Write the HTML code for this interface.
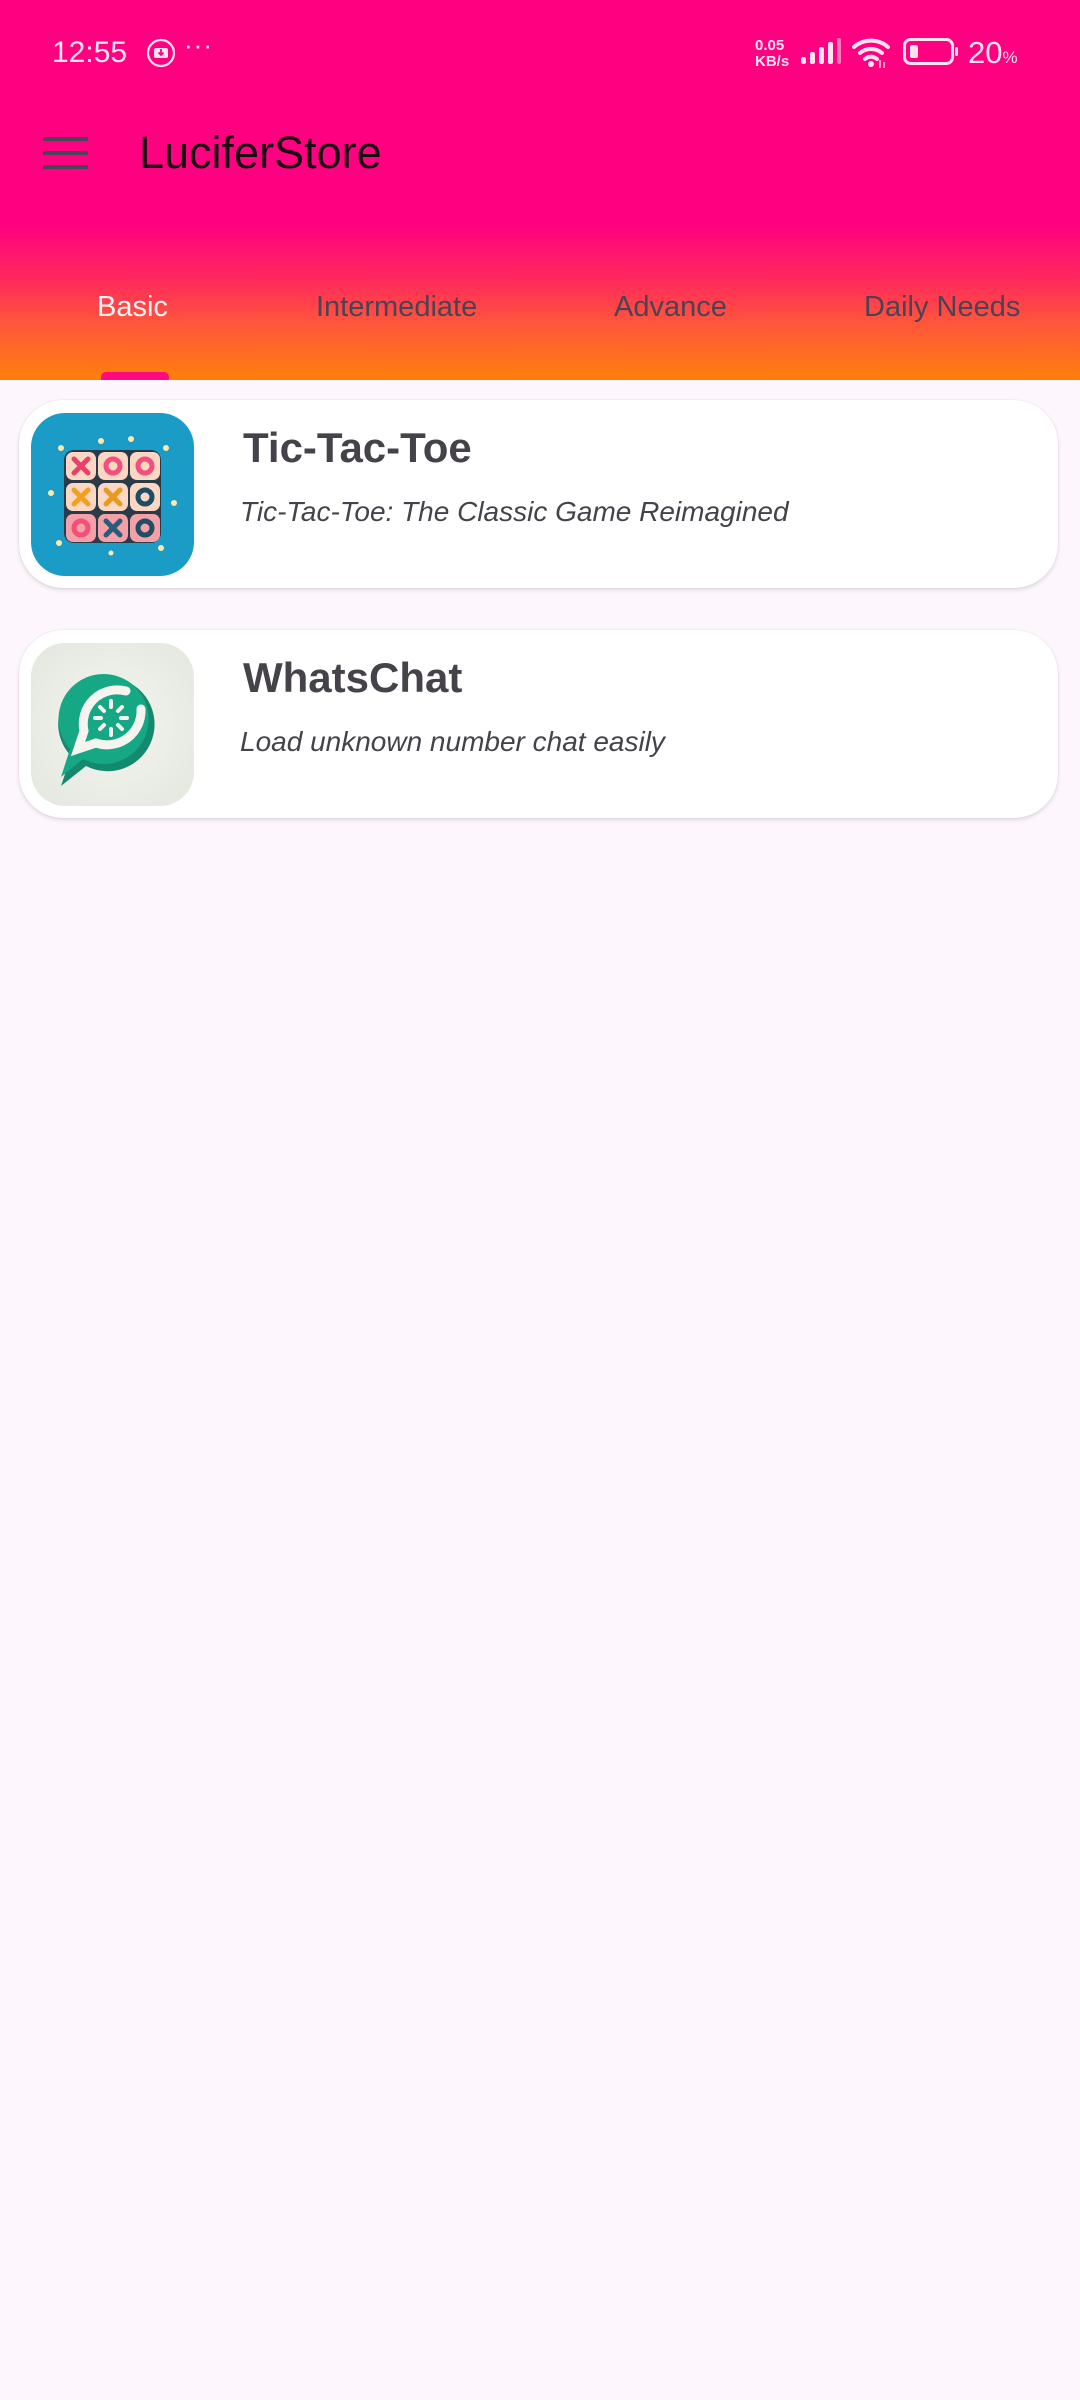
<!DOCTYPE html>
<html><head><meta charset="utf-8">
<style>
html,body{margin:0;padding:0}
body{width:1080px;height:2400px;background:#FDF6FD;font-family:"Liberation Sans",sans-serif;position:relative;overflow:hidden}
.top{position:absolute;left:0;top:0;width:1080px;height:380px;background:linear-gradient(180deg,#FF0080 0px,#FF0080 225px,#FF2A5C 280px,#FF5A38 328px,#FF7F0A 380px)}
.abs{position:absolute}
.tab{position:absolute;top:291px;font-size:29px;color:#4A4452;white-space:nowrap}
.card{position:absolute;left:19px;width:1039px;height:188px;background:#fff;border-radius:44px;box-shadow:0 2px 4px rgba(0,0,0,0.12),0 0 1px rgba(0,0,0,0.15)}
.icon{position:absolute;left:12px;top:13px;width:163px;height:163px;border-radius:34px;overflow:hidden}
.ttl{position:absolute;left:224px;font-size:42px;font-weight:bold;color:#45424A;white-space:nowrap}
.sub{position:absolute;left:221px;font-size:28px;font-style:italic;color:#45424A;white-space:nowrap}
</style></head><body>
<div class="top"></div>
<!-- status bar -->
<div class="abs" style="left:52px;top:36px;font-size:30px;color:#FDE3F0">12:55</div>
<svg class="abs" style="left:146px;top:38px" width="30" height="30" viewBox="0 0 30 30"><circle cx="15" cy="15" r="13" fill="none" stroke="#FDE3F0" stroke-width="2.2"/><rect x="8" y="10" width="14" height="10" rx="2" fill="#FDE3F0"/><path d="M15 11v6M12.5 14.5L15 17l2.5-2.5" stroke="#FF0080" stroke-width="1.8" fill="none"/></svg>
<div class="abs" style="left:184px;top:30px;font-size:26px;color:#FDE3F0;letter-spacing:1px">···</div>
<div class="abs" style="left:755px;top:38px;font-size:15px;line-height:16px;font-weight:bold;color:#FDE3F0">0.05<br>KB/s</div>
<svg class="abs" style="left:800px;top:38px" width="42" height="28" viewBox="0 0 42 28"><rect x="1" y="19" width="5" height="7" rx="2" fill="#FDE3F0"/><rect x="10" y="14" width="5" height="12" rx="2" fill="#FDE3F0"/><rect x="19" y="9" width="5" height="17" rx="2" fill="#FDE3F0"/><rect x="28" y="4" width="5" height="22" rx="2" fill="#FDE3F0"/><rect x="37" y="0" width="4" height="26" rx="2" fill="#FF7AB8"/></svg>
<svg class="abs" style="left:852px;top:36px" width="40" height="32" viewBox="0 0 40 32"><path d="M2 11a26 26 0 0 1 34 0" stroke="#FDE3F0" stroke-width="4" fill="none" stroke-linecap="round"/><path d="M8 17a17 17 0 0 1 22 0" stroke="#FDE3F0" stroke-width="4" fill="none" stroke-linecap="round"/><path d="M13 23a9 9 0 0 1 12 0" stroke="#FDE3F0" stroke-width="4" fill="none" stroke-linecap="round"/><circle cx="19" cy="28" r="3" fill="#FDE3F0"/><path d="M28 24v8M32 26v6" stroke="#FF9AC8" stroke-width="2"/></svg>
<svg class="abs" style="left:903px;top:38px" width="58" height="28" viewBox="0 0 58 28"><rect x="1.5" y="1.5" width="48" height="24" rx="6" fill="none" stroke="#FDE3F0" stroke-width="3"/><rect x="7" y="7" width="8" height="13" rx="2" fill="#FDE3F0"/><rect x="52" y="9" width="3" height="9" rx="1.5" fill="#FDE3F0"/></svg>
<div class="abs" style="left:968px;top:35px;font-size:31px;color:#FDE3F0">20<span style="font-size:17px">%</span></div>
<!-- app bar -->
<div class="abs" style="left:43px;top:137px;width:45px;height:4px;background:#4A4458"></div>
<div class="abs" style="left:43px;top:151px;width:45px;height:4px;background:#4A4458"></div>
<div class="abs" style="left:43px;top:165px;width:45px;height:4px;background:#4A4458"></div>
<div class="abs" style="left:139px;top:127px;font-size:45px;color:#1A0A12">LuciferStore</div>
<!-- tabs -->
<div class="tab" style="left:97px;color:#FFF5F7">Basic</div>
<div class="tab" style="left:316px">Intermediate</div>
<div class="tab" style="left:614px">Advance</div>
<div class="tab" style="left:864px">Daily Needs</div>
<div class="abs" style="left:101px;top:372px;width:68px;height:8px;background:#FF0A80;border-radius:5px 5px 0 0"></div>
<!-- card 1 -->
<div class="card" style="top:400px">
 <div class="icon" style="background:#1A9CC6">
  <svg width="163" height="163" viewBox="0 0 163 163">
   <g fill="#FFE9A8"><circle cx="30" cy="35" r="3"/><circle cx="70" cy="28" r="3"/><circle cx="100" cy="26" r="3"/><circle cx="135" cy="35" r="3"/><circle cx="20" cy="80" r="3"/><circle cx="143" cy="90" r="3"/><circle cx="28" cy="130" r="3"/><circle cx="80" cy="140" r="2.5"/><circle cx="130" cy="135" r="3"/></g>
   <g>
    <rect x="33" y="37" width="97" height="93" rx="10" fill="#2A3A48"/>
    <rect x="35" y="39" width="30" height="28" rx="7" fill="#FBD7C4"/><rect x="67" y="39" width="30" height="28" rx="7" fill="#FBD7C4"/><rect x="99" y="39" width="30" height="28" rx="7" fill="#FBD7C4"/>
    <rect x="35" y="70" width="30" height="28" rx="7" fill="#FBD7C4"/><rect x="67" y="70" width="30" height="28" rx="7" fill="#FBD7C4"/><rect x="99" y="70" width="30" height="28" rx="7" fill="#FBD7C4"/>
    <rect x="35" y="101" width="30" height="28" rx="7" fill="#F4A0A8"/><rect x="67" y="101" width="30" height="28" rx="7" fill="#F4A0A8"/><rect x="99" y="101" width="30" height="28" rx="7" fill="#F4A0A8"/>
    <path d="M43 46l14 14M57 46l-14 14" stroke="#E8406A" stroke-width="5" stroke-linecap="round"/>
    <circle cx="82" cy="53" r="7" fill="none" stroke="#F0507A" stroke-width="5"/>
    <circle cx="114" cy="53" r="7" fill="none" stroke="#F0507A" stroke-width="5"/>
    <path d="M43 77l14 14M57 77l-14 14" stroke="#F2A020" stroke-width="5" stroke-linecap="round"/>
    <path d="M75 77l14 14M89 77l-14 14" stroke="#E89A20" stroke-width="5" stroke-linecap="round"/>
    <circle cx="114" cy="84" r="7" fill="none" stroke="#1E4E66" stroke-width="5"/>
    <circle cx="50" cy="115" r="7" fill="none" stroke="#F0507A" stroke-width="5"/>
    <path d="M75 108l14 14M89 108l-14 14" stroke="#2A5C7A" stroke-width="5" stroke-linecap="round"/>
    <circle cx="114" cy="115" r="7" fill="none" stroke="#1E4E66" stroke-width="5"/>
   </g>
  </svg>
 </div>
 <div class="ttl" style="top:24px">Tic-Tac-Toe</div>
 <div class="sub" style="top:96px">Tic-Tac-Toe: The Classic Game Reimagined</div>
</div>
<!-- card 2 -->
<div class="card" style="top:630px">
 <div class="icon" style="background:radial-gradient(circle at 50% 50%,#F4F5F0,#E3E7DE)">
  <svg width="163" height="163" viewBox="0 0 163 163">
   <path d="M85 35a47 47 0 1 1-30 88l-25 20 10-30a47 47 0 0 1 45-78z" fill="#138A6E"/>
   <path d="M82 32a45 45 0 1 1-30 84l-22 18 9-28a45 45 0 0 1 43-74z" fill="#16A884"/>
   <path d="M95 48a34 34 0 0 0-42 40l-6 18 18-6a34 34 0 0 0 45-34" fill="none" stroke="#F6F4EE" stroke-width="9" stroke-linecap="round"/>
   <g stroke="#F6F4EE" stroke-width="4" stroke-linecap="round"><path d="M80 58v6M80 86v6M64 75h6M90 75h6M69 64l4 4M87 82l4 4M91 64l-4 4M73 82l-4 4"/></g>
  </svg>
 </div>
 <div class="ttl" style="top:24px">WhatsChat</div>
 <div class="sub" style="top:96px">Load unknown number chat easily</div>
</div>
</body></html>
